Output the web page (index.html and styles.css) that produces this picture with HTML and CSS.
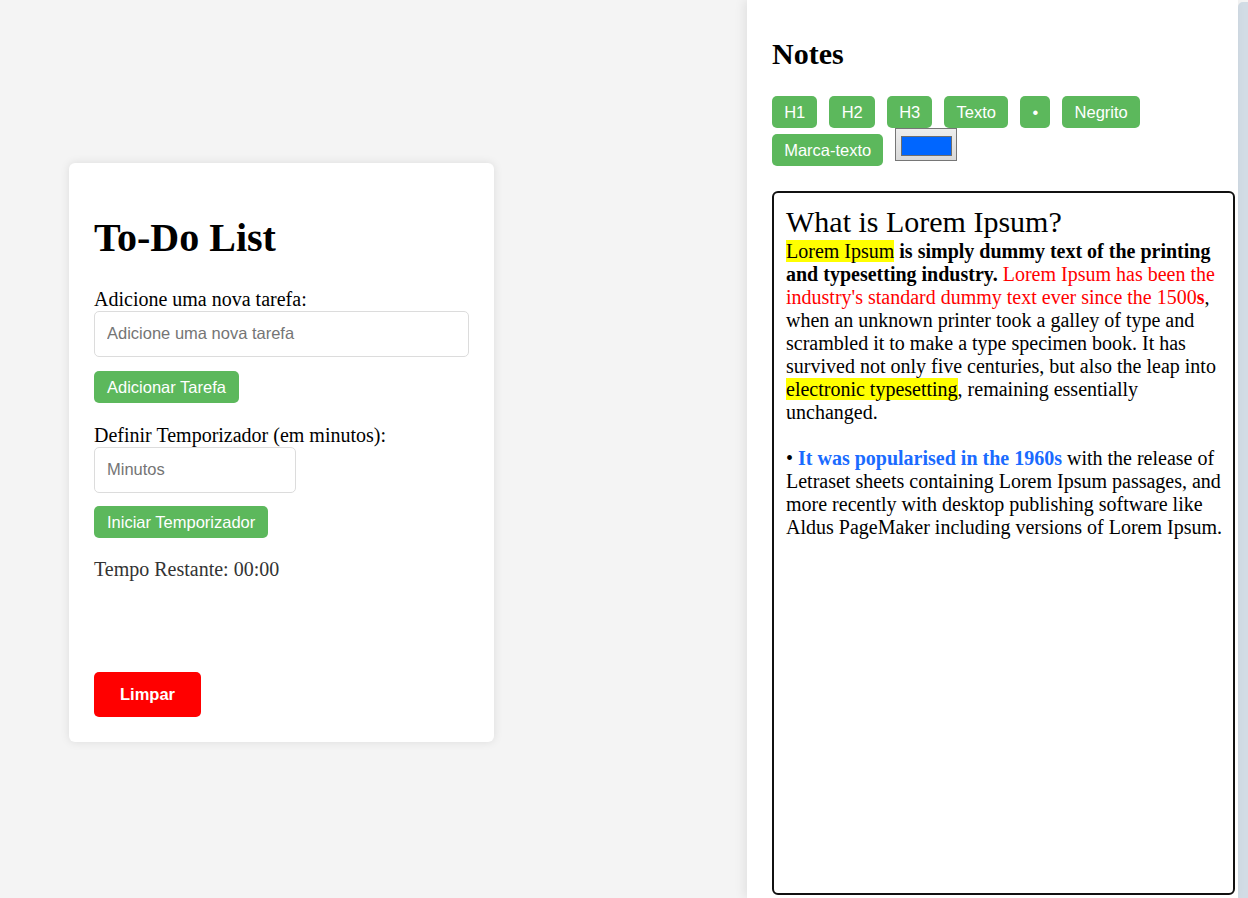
FILE: index.html
```html
<!DOCTYPE html>
<html lang="pt">
<head>
<meta charset="utf-8">
<title>To-Do List &amp; Notes</title>
<link rel="stylesheet" href="styles.css">
</head>
<body>
<div class="app">
  <main class="todo-area">
    <section class="card">
      <h1 class="card-title">To-Do List</h1>
      <label class="field-label" for="task">Adicione uma nova tarefa:</label>
      <input class="text-input task-input" id="task" type="text" placeholder="Adicione uma nova tarefa">
      <button class="btn btn-green card-btn add-btn">Adicionar Tarefa</button>
      <label class="field-label timer-label" for="minutes">Definir Temporizador (em minutos):</label>
      <input class="text-input minutes-input" id="minutes" type="number" placeholder="Minutos">
      <button class="btn btn-green card-btn start-btn">Iniciar Temporizador</button>
      <p class="time-left">Tempo Restante: 00:00</p>
      <ul class="task-list"></ul>
      <button class="btn btn-red clear-btn">Limpar</button>
    </section>
  </main>
  <aside class="notes">
    <h2 class="notes-title">Notes</h2>
    <div class="toolbar">
      <button class="btn btn-green tool">H1</button>
      <button class="btn btn-green tool">H2</button>
      <button class="btn btn-green tool">H3</button>
      <button class="btn btn-green tool">Texto</button>
      <button class="btn btn-green tool">•</button>
      <button class="btn btn-green tool">Negrito</button>
      <button class="btn btn-green tool">Marca-texto</button>
      <input class="color-input" type="color" value="#0066ff">
    </div>
    <div class="editor" contenteditable="true">
      <div class="ed-heading">What is Lorem Ipsum?</div>
      <div><span class="hl">Lorem Ipsum</span><b> is simply dummy text of the printing and typesetting industry.</b><span class="red"> Lorem Ipsum has been the industry's standard dummy text ever since the 1500<b>s</b></span>, when an unknown printer took a galley of type and scrambled it to make a type specimen book. It has survived not only five centuries, but also the leap into <span class="hl">electronic typesetting</span>, remaining essentially unchanged.</div>
      <div><br></div>
      <div>• <b class="blue">It was popularised in the 1960s</b> with the release of Letraset sheets containing Lorem Ipsum passages, and more recently with desktop publishing software like Aldus PageMaker including versions of Lorem Ipsum.</div>
    </div>
  </aside>
  <div class="edge-strip"></div>
</div>
</body>
</html>
```

FILE: styles.css
```css
html, body {
  margin: 0;
  padding: 0;
}

body {
  background: #f4f4f4;
  font-family: "Liberation Serif", "Times New Roman", serif;
  font-size: 20px;
  color: #000;
}

.app {
  display: flex;
  height: 898px;
  overflow: hidden;
}

.todo-area {
  flex: 0 0 747px;
  box-sizing: border-box;
  display: flex;
  align-items: center;
  padding-left: 69px;
  padding-top: 7px;
}

.card {
  width: 425px;
  box-sizing: border-box;
  background: #fff;
  border-radius: 6px;
  box-shadow: 0 0 10px rgba(0, 0, 0, 0.1);
  padding: 25px;
  display: flex;
  flex-direction: column;
  align-items: flex-start;
}

.card-title {
  font-size: 40px;
  font-weight: bold;
  margin: 26.8px 0;
  line-height: 46px;
}

.field-label {
  display: block;
  line-height: 23px;
}

.timer-label {
  margin-top: 21px;
}

.text-input {
  box-sizing: border-box;
  height: 46px;
  border: 1px solid #dcdcdc;
  border-radius: 5px;
  padding: 0 12px;
  font-family: "Liberation Sans", Arial, sans-serif;
  font-size: 16.5px;
  color: #000;
  background: #fff;
  outline: none;
  margin: 0;
}

.text-input::placeholder {
  color: #757575;
}

.task-input {
  width: 100%;
  margin-bottom: 14px;
}

.minutes-input {
  width: 202px;
  margin-bottom: 13px;
  -moz-appearance: textfield;
}

.minutes-input::-webkit-outer-spin-button,
.minutes-input::-webkit-inner-spin-button {
  -webkit-appearance: none;
  margin: 0;
}

.btn {
  border: none;
  border-radius: 5px;
  font-family: "Liberation Sans", Arial, sans-serif;
  font-size: 16.5px;
  line-height: 18px;
  color: #fff;
  cursor: pointer;
  margin: 0;
}

.btn-green {
  background: #5cb85c;
  padding: 7px 12px;
}

.card-btn {
  padding: 7px 13px;
}

.btn-red {
  background: #ff0000;
  font-weight: bold;
  line-height: 19px;
  padding: 13px 26px;
}

.time-left {
  margin: 20px 0 0;
  line-height: 23px;
  color: #333;
}

.task-list {
  margin: 0;
  padding: 0;
  list-style: none;
}

.clear-btn {
  margin-top: 91px;
}

.notes {
  flex: 0 0 491px;
  box-sizing: border-box;
  background: #fff;
  box-shadow: -3px 0 10px rgba(0, 0, 0, 0.08);
  padding: 12px 3px 3px 25px;
  display: flex;
  flex-direction: column;
  position: relative;
  z-index: 1;
}

.notes-title {
  font-size: 30px;
  font-weight: bold;
  line-height: 34.5px;
  margin: 24.9px 0;
}

.toolbar {
  display: flex;
  flex-wrap: wrap;
  align-items: flex-start;
  gap: 6px 12px;
}

.tool {
  padding: 7px 12.2px;
}

.color-input {
  box-sizing: border-box;
  width: 62px;
  height: 33px;
  margin: -6px 0 0 0;
  padding: 0;
  border: 1px solid #767676;
  background: linear-gradient(#ededed, #d9d9d9);
  cursor: pointer;
}

.color-input::-webkit-color-swatch-wrapper {
  padding: 7px 4px 4px 5px;
}

.color-input::-webkit-color-swatch {
  border: 1px solid #6e6e6e;
  border-radius: 0;
}

.editor {
  flex: 1;
  margin-top: 25px;
  border: 2px solid #111;
  border-radius: 6px;
  padding: 12px 4px 12px 12px;
  line-height: 23px;
  outline: none;
  overflow: hidden;
}

.ed-heading {
  font-size: 30px;
  line-height: 34.5px;
}

.hl {
  background: #ffff00;
}

.red {
  color: #ff0000;
}

.blue {
  color: #1a6bff;
}

.edge-strip {
  flex: 0 0 10px;
  margin-top: 2px;
  background: #d2dce5;
  border-top-left-radius: 5px;
}
```
